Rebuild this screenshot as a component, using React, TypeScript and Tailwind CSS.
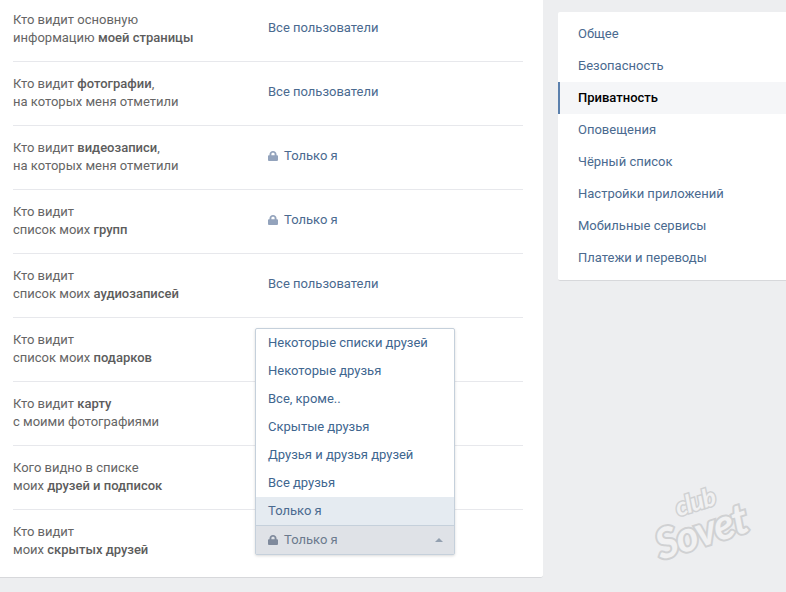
import React from "react";

const rows: [React.ReactNode, React.ReactNode, string, boolean][] = [
  ["Кто видит основную", <>информацию <b className="font-medium text-[#5c5c5c]">моей страницы</b></>, "Все пользователи", false],
  [<>Кто видит <b className="font-medium text-[#5c5c5c]">фотографии</b>,</>, "на которых меня отметили", "Все пользователи", false],
  [<>Кто видит <b className="font-medium text-[#5c5c5c]">видеозаписи</b>,</>, "на которых меня отметили", "Только я", true],
  ["Кто видит", <>список моих <b className="font-medium text-[#5c5c5c]">групп</b></>, "Только я", true],
  ["Кто видит", <>список моих <b className="font-medium text-[#5c5c5c]">аудиозаписей</b></>, "Все пользователи", false],
  ["Кто видит", <>список моих <b className="font-medium text-[#5c5c5c]">подарков</b></>, "", false],
  [<>Кто видит <b className="font-medium text-[#5c5c5c]">карту</b></>, "с моими фотографиями", "", false],
  ["Кого видно в списке", <>моих <b className="font-medium text-[#5c5c5c]">друзей и подписок</b></>, "", false],
  ["Кто видит", <>моих <b className="font-medium text-[#5c5c5c]">скрытых друзей</b></>, "", false],
];

const menu = ["Общее", "Безопасность", "Приватность", "Оповещения", "Чёрный список", "Настройки приложений", "Мобильные сервисы", "Платежи и переводы"];
const options = ["Некоторые списки друзей", "Некоторые друзья", "Все, кроме..", "Скрытые друзья", "Друзья и друзья друзей", "Все друзья"];

function Lock({ color }: { color: string }) {
  return (
    <svg width="10" height="10" viewBox="0 0 10 10" className="shrink-0">
      <path fillRule="evenodd" d="M1.500 4.200V3.200C1.500 1.300 3 0 5 0s3.500 1.300 3.500 3.200v1h.6c.5 0 .9.400.9.900V9.100c0 .5-.4.900-.9.900H.9C.4 10 0 9.600 0 9.100V5.100c0-.5.400-.9.900-.9h.6zM3.400 4.200h3.200v-1C6.600 2.300 5.900 1.800 5 1.800s-1.600.5-1.600 1.400v1z" fill={color} />
    </svg>
  );
}

export default function App() {
  return (
    <div className="relative flex h-[592px] w-[786px] items-start gap-[15px] overflow-hidden bg-[#edeef0] font-['Roboto',sans-serif] text-[13px] leading-[18px]">
      <div className="relative -mt-[2px] h-[580px] w-[543px] shrink-0 rounded-br-[3px] border-b border-[#d7d8db] bg-white pl-[13px] pr-[20px]">
        {rows.map((r, i) => (
          <div key={i} className={`flex h-[64px] items-center ${i < rows.length - 1 ? "border-b border-[#e7e8ec]" : ""}`}>
            <div className="w-[255px] shrink-0 pb-[2px] text-[#656565]">
              <div>{r[0]}</div>
              <div>{r[1]}</div>
            </div>
            {r[2] && (
              <div className="flex items-center gap-[6px] pb-[3px] text-[#4a6a8f]">
                {r[3] && <Lock color="#93a3bc" />}
                <span>{r[2]}</span>
              </div>
            )}
          </div>
        ))}
        <div className="absolute left-[255px] top-[330px] w-[200px] rounded-[2px] border border-[#c5d0db] bg-white shadow-[0_1px_3px_rgba(0,0,0,0.15)]">
          {options.map((o) => (
            <div key={o} className="flex h-[28px] items-center px-[12px] text-[#40668f]">{o}</div>
          ))}
          <div className="flex h-[28px] items-center bg-[#e5ebf1] px-[12px] text-[#4a6a8f]">Только я</div>
          <div className="flex h-[29px] items-center gap-[6px] border-t border-[#c5d0db] bg-[#dfe2e7] px-[12px] text-[#6b7a8d]">
            <Lock color="#7f8a9c" />
            <span>Только я</span>
            <svg width="8" height="4" viewBox="0 0 8 4" className="ml-auto mr-[-1px]">
              <path d="M0 4 4 0l4 4z" fill="#93a0b0" />
            </svg>
          </div>
        </div>
      </div>
      <div className="mt-[12px] w-[240px] shrink-0 rounded-tl-[2px] rounded-bl-[2px] border-b border-[#d7d8db] bg-white py-[6px]">
        {menu.map((m, i) => (
          <div
            key={m}
            className={
              i === 2
                ? "flex h-[32px] items-center border-l-2 border-[#5b80ad] bg-[#f5f6f8] pl-[18px] font-medium text-black"
                : "flex h-[32px] items-center pl-[20px] text-[#4a6a8f]"
            }
          >
            {m}
          </div>
        ))}
      </div>
      <div className="pointer-events-none absolute left-[650px] top-[486px] h-[76px] w-[108px] -rotate-[18deg] font-['Lato',sans-serif] font-bold italic text-[#f1f1f2]">
        <span className="absolute left-[32px] top-[3px] text-[25px] leading-[20px] tracking-[-1px] [-webkit-text-stroke:3px_#d0d1d3] [paint-order:stroke_fill]">club</span>
        <span className="absolute left-[2px] top-[27px] text-[42px] leading-[32px] tracking-[-1px] [-webkit-text-stroke:4px_#d0d1d3] [paint-order:stroke_fill]">Sovet</span>
      </div>
    </div>
  );
}
